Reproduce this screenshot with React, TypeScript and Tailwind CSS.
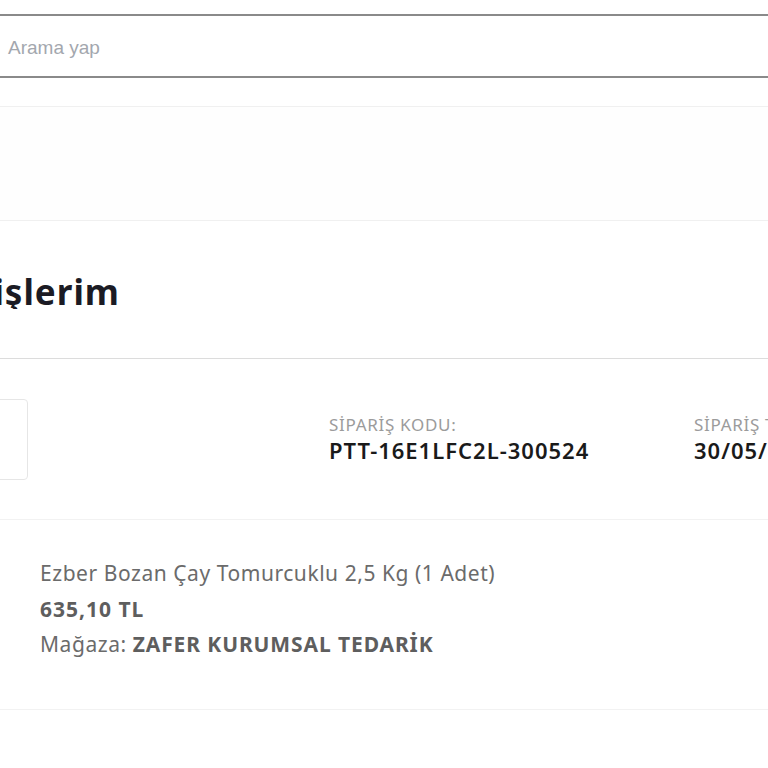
export default function App() {
  const plex = { fontFamily: '"Noto Sans", "Open Sans", sans-serif' };
  return (
    <div className="w-[768px] h-[768px] overflow-hidden bg-white" style={plex}>
      <div className="h-[14px]" />
      <div className="h-[64px] border-y-2 border-[#8a8a8a] flex items-center pl-[8px] pt-[4px]">
        <span className="text-[19px] text-[#a3a7ae]" style={{ fontFamily: '"Liberation Sans", Arial, sans-serif' }}>
          Arama yap
        </span>
      </div>
      <div className="h-[28px]" />
      <div className="h-[115px] border-y border-[#f0f0f0] bg-[#fefefe]" />
      <div className="h-[138px] border-b border-[#dcdcdc] flex items-center pt-[4px]">
        <div className="w-[120px] overflow-hidden flex justify-end whitespace-nowrap">
          <h1 className="text-[35px] font-bold tracking-[1px] text-[#1b1b24] leading-none">Siparişlerim</h1>
        </div>
      </div>
      <div className="h-[161px] border-b border-[#f2f2f2] flex items-center whitespace-nowrap">
        <div className="w-[28px] overflow-hidden flex justify-end shrink-0">
          <div className="w-[80px] h-[81px] shrink-0 border border-[#e6e6e6] rounded-[4px]" />
        </div>
        <div className="ml-[301px] flex flex-col w-[365px] shrink-0">
          <span className="text-[17px] tracking-[0.7px] leading-[22px] text-[#9b9b9b]">SİPARİŞ KODU:</span>
          <span className="text-[22px] tracking-[1px] leading-[28px] font-semibold text-[#1a1a1a]">PTT-16E1LFC2L-300524</span>
        </div>
        <div className="flex flex-col shrink-0">
          <span className="text-[17px] tracking-[0.7px] leading-[22px] text-[#9b9b9b]">SİPARİŞ TARİHİ:</span>
          <span className="text-[22px] tracking-[1px] leading-[28px] font-semibold text-[#1a1a1a]">30/05/2024</span>
        </div>
      </div>
      <div className="h-[190px] border-b border-[#f2f2f2] flex flex-col justify-center pl-[40px] pb-[10px] text-[#6b6b6b] whitespace-nowrap">
        <div className="text-[21px] tracking-[0.55px] leading-[35.5px]">Ezber Bozan Çay Tomurcuklu 2,5 Kg (1 Adet)</div>
        <div className="text-[21px] tracking-[1px] leading-[35.5px] font-bold text-[#5e5e5e]">635,10 TL</div>
        <div className="text-[21px] tracking-[0.55px] leading-[35.5px]">
          Mağaza: <span className="font-bold tracking-[0.9px] text-[#5e5e5e]">ZAFER KURUMSAL TEDARİK</span>
        </div>
      </div>
    </div>
  );
}
